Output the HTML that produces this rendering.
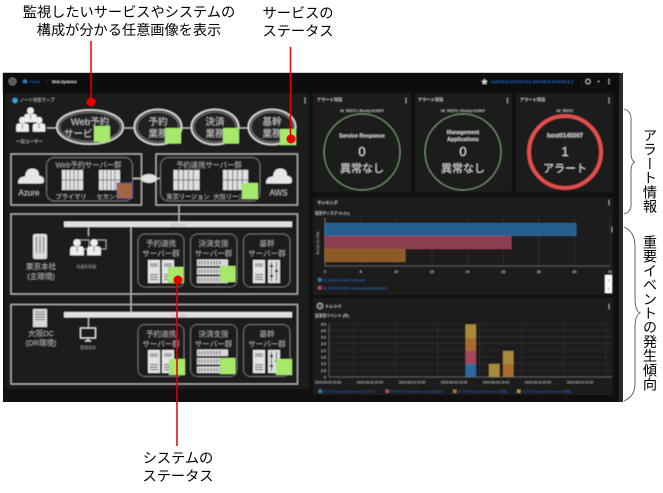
<!DOCTYPE html>
<html lang="ja"><head><meta charset="utf-8"><title>Web Systems</title>
<style>
html,body{margin:0;padding:0;background:#fff;width:663px;height:493px;overflow:hidden}
svg{position:absolute;left:0;top:0}
text{font-family:"Liberation Sans","Noto Sans CJK JP",sans-serif}
.jp{font-family:"Liberation Sans","Noto Sans CJK JP",sans-serif;color:#000;position:absolute;font-size:14.2px;line-height:18px;white-space:nowrap;text-align:center}
.v{writing-mode:vertical-rl;text-orientation:mixed;line-height:16px;letter-spacing:0}
.t{fill:#bdbdbd;text-anchor:middle}
</style></head><body>
<svg width="663" height="493" viewBox="0 0 663 493" xmlns="http://www.w3.org/2000/svg">
<defs>
<filter id="soft"><feGaussianBlur stdDeviation="0.4"/></filter>
<g id="srv"><rect x="0" y="0" width="12" height="23" fill="#e4e4e4"/><rect x="2" y="3" width="8" height="4" fill="#aaa"/><rect x="2" y="14" width="8" height="1.2" fill="#777"/><rect x="2" y="16.5" width="8" height="1.2" fill="#777"/><rect x="2" y="19" width="8" height="1.2" fill="#777"/></g>
<g id="rack"><rect x="0" y="0" width="31" height="6.5" fill="#d8d8d8"/><rect x="0" y="8.5" width="31" height="6.5" fill="#d8d8d8"/><rect x="0" y="17" width="31" height="6.5" fill="#d8d8d8"/><path d="M2 1.5V5M5 1.5V5M8 1.5V5M11 1.5V5M14 1.5V5M17 1.5V5M20 1.5V5M23 1.5V5M2 10V13.500M5 10V13.500M8 10V13.500M11 10V13.500M14 10V13.500M17 10V13.500M20 10V13.500M23 10V13.500M2 18.500V22M5 18.500V22M8 18.500V22M11 18.500V22M14 18.500V22M17 18.500V22M20 18.500V22M23 18.500V22" stroke="#777" stroke-width="1.200"/></g>
<g id="sw"><rect x="0" y="0" width="12" height="23" fill="#ddd"/><path d="M3.500 2V21M8.500 2V21" stroke="#555" stroke-width="1"/><rect x="2" y="5" width="3" height="2" fill="#222"/><rect x="7" y="10" width="3" height="2" fill="#222"/><rect x="2" y="15" width="3" height="2" fill="#222"/></g>
<g id="blade"><rect x="0" y="0" width="21" height="20" fill="#e0e0e0"/><path d="M4 0V20M8 0V20M12 0V20M16 0V20" stroke="#8a8a8a" stroke-width="1"/><path d="M0 10H21" stroke="#555" stroke-width=".8"/></g>
<g id="person"><circle cx="0" cy="-5" r="3.200" fill="#eee"/><path d="M-6 6V1Q-6 -2 -3 -2H3Q6 -2 6 1V6Z" fill="#eee"/><path d="M0 -2V3" stroke="#555" stroke-width=".7"/></g>
<g id="cloud"><path d="M-13 7Q-13 0 -6 0Q-5 -8 1 -8Q8 -8 8 -1Q13 0 13 4Q13 7 10 7Z" fill="#e6e6e6"/></g>
</defs>
<rect x="3" y="73" width="620" height="329" fill="#101010"/>
<rect x="619" y="73" width="4" height="329" fill="#2b2b2b"/>
<g filter="url(#soft)">
<rect x="3" y="73" width="616" height="20" fill="#0c0c0c"/>
<!-- top bar -->
<circle cx="12.500" cy="81.500" r="4" fill="#6d6d6d"/><path d="M10 80h5M10 81.500h5M10 83h5" stroke="#222" stroke-width=".6"/>
<path d="M23 83V81L25 79L27 81V83Z" fill="#2f7fd0"/>
<text x="30" y="83" font-size="3.600" fill="#1f6cc4">Home</text>
<text x="46" y="83" font-size="4" fill="#888">›</text>
<text x="52" y="83" font-size="3.800" font-weight="bold" fill="#d5d5d5">Web Systems</text>
<path d="M484.500 78.500l1 2.200 2.300.2-1.800 1.500.6 2.200-2.100-1.200-2.100 1.200.6-2.200-1.800-1.500 2.300-.2z" fill="#ddd"/>
<text x="491" y="83" font-size="3.500" fill="#1f5fb5" font-weight="bold">2023-08-03 15:00:00 から 2023-08-03 16:00:00 まで</text>
<circle cx="588" cy="81.500" r="2.300" fill="none" stroke="#ccc" stroke-width=".8"/>
<rect x="582" y="76" width="13" height="11" fill="none" stroke="#222" stroke-width=".6"/>
<rect x="597" y="76" width="9" height="11" fill="none" stroke="#222" stroke-width=".6"/>
<circle cx="598.500" cy="81.500" r=".7" fill="#ccc"/><path d="M609 79v5" stroke="#ccc" stroke-width="1" stroke-dasharray="1 1"/>
<!-- left panel -->
<rect x="5" y="94" width="304" height="295" fill="#1c1c1c"/>
<circle cx="15" cy="100.500" r="2.600" fill="#35a6e0"/>
<text x="20" y="101.500" font-size="4.300" fill="#bbb">ノード状態マップ</text>
<path d="M305 98v5" stroke="#ccc" stroke-width="1" stroke-dasharray="1 1"/>
<!-- persons -->
<use href="#person" transform="translate(30.500 116) scale(1.050)"/>
<use href="#person" transform="translate(22.500 125.500) scale(1.050)"/>
<use href="#person" transform="translate(39 125.500) scale(1.050)"/>
<text x="29.500" y="143" font-size="4.500" class="t">一般ユーザー</text>
<path d="M47 128H58M124 128H135M181 128H192M239 128H249" stroke="#bbb" stroke-width="1.200"/>
<g fill="#202020" stroke="#d5d5d5">
<ellipse cx="90" cy="127" rx="33" ry="17" stroke-width="1.800"/>
<ellipse cx="158" cy="127" rx="23.500" ry="17.500" stroke-width="1.800"/>
<ellipse cx="215" cy="127" rx="23.500" ry="17.500" stroke-width="1.800"/>
<ellipse cx="272" cy="127" rx="23.500" ry="17.500" stroke-width="1.800"/>
</g>
<g fill="none" stroke="#6f6f6f" stroke-width="1.300">
<ellipse cx="90" cy="127" rx="30.500" ry="14.500"/>
<ellipse cx="158" cy="127" rx="21" ry="15"/>
<ellipse cx="215" cy="127" rx="21" ry="15"/>
<ellipse cx="272" cy="127" rx="21" ry="15"/>
</g>
<g font-size="9.500" text-anchor="middle" fill="#c4c4c4">
<text x="90" y="125">Web予約</text><text x="83" y="137">サービス</text>
<text x="158" y="125">予約</text><text x="158" y="137">業務</text>
<text x="215" y="125">決済</text><text x="215" y="137">業務</text>
<text x="272" y="125">基幹</text><text x="272" y="137">業務</text>
</g>
<g fill="#a6e86a">
<rect x="94" y="126" width="16" height="16"/><rect x="165" y="128" width="16" height="15.500"/><rect x="223" y="128" width="16" height="15.500"/><rect x="280" y="129" width="16" height="16"/>
</g>
<!-- cloud boxes -->
<g fill="none" stroke="#b5b5b5" stroke-width="1.200">
<rect x="11" y="154" width="130.500" height="51"/><rect x="156" y="154" width="141.500" height="51"/>
<rect x="11" y="214" width="286.500" height="80"/><rect x="11" y="304.500" width="286.500" height="79.500"/>
</g>
<g fill="none" stroke="#6e6e6e" stroke-width="1">
<rect x="46.500" y="157.500" width="86" height="43.500" rx="8"/><rect x="160.500" y="157.500" width="99.500" height="43.500" rx="8"/>
</g>
<path d="M133 178.500H145M153 178.500H160" stroke="#ccc" stroke-width="1.500"/>
<ellipse cx="149" cy="178.500" rx="8" ry="4.500" fill="#e2e2e2"/>
<use href="#cloud" transform="translate(31 176.500)"/><use href="#cloud" transform="translate(279 176.500)"/>
<text x="29" y="195.500" font-size="8" fill="#bdbdbd" text-anchor="middle">Azure</text>
<text x="278.500" y="195.500" font-size="8" fill="#bdbdbd" text-anchor="middle">AWS</text>
<g font-size="7.300" fill="#a0a0a0" text-anchor="middle">
<text x="88.500" y="167.500">Web予約サーバー群</text><text x="209" y="167.500">予約連携サーバー群</text>
</g>
<use href="#blade" transform="translate(62 170)"/><use href="#blade" transform="translate(99 170)"/>
<use href="#blade" transform="translate(173.500 170) scale(1.240 1)"/><use href="#blade" transform="translate(223 170) scale(1.200 1)"/>
<g font-size="6.200" fill="#b0b0b0" text-anchor="middle">
<text x="71" y="199">プライマリ</text><text x="112" y="199">セカンダリ</text>
<text x="188" y="199">東京リージョン</text><text x="235" y="199">大阪リージョン</text>
</g>
<rect x="117" y="183" width="15.500" height="15.500" fill="#a5663f" stroke="#4a4aa8" stroke-width=".8"/>
<rect x="242" y="183" width="16" height="16" fill="#a6e86a"/>
<path d="M179 205V222M131 227V312M88.500 227V236M88.500 317V328" stroke="#bbb" stroke-width="1.200"/>
<rect x="64" y="221.500" width="228" height="5.500" fill="#e0e0e0"/>
<rect x="64" y="312" width="228" height="5.500" fill="#e0e0e0"/>
<text x="178" y="226" font-size="4" fill="#aaa" text-anchor="middle">本社LAN</text>
<text x="178" y="316.500" font-size="4" fill="#aaa" text-anchor="middle">DC LAN</text>
<!-- HQ building -->
<rect x="33" y="234" width="14" height="25" rx="2" fill="#dcdcdc"/>
<path d="M36.500 237V253M40 237V253M43.500 237V253" stroke="#555" stroke-width="1"/>
<g font-size="7.500" fill="#a5a5a5" text-anchor="middle">
<text x="41" y="269">東京本社</text><text x="41" y="279">(主環境)</text>
<text x="41" y="336">大阪DC</text><text x="41" y="345.500">(DR環境)</text>
</g>
<rect x="77" y="240" width="12" height="9" fill="none" stroke="#bbb" stroke-width=".8"/><rect x="94" y="240" width="12" height="9" fill="none" stroke="#bbb" stroke-width=".8"/>
<use href="#person" transform="translate(77 248.500) scale(1.150)"/><use href="#person" transform="translate(94 248.500) scale(1.150)"/>
<text x="86.500" y="268" font-size="4" fill="#999" text-anchor="middle">社員利用者</text>
<!-- DC building -->
<rect x="33" y="309" width="14" height="18" fill="#d8d8d8"/><path d="M35 312h10M35 314.500h10M35 317h10M35 319.500h10" stroke="#666" stroke-width=".9"/>
<rect x="80.500" y="328" width="15" height="10" fill="none" stroke="#ddd" stroke-width="1.300"/>
<path d="M85 341H91M88 338V341" stroke="#ddd" stroke-width="1.300"/>
<text x="88" y="349" font-size="4" fill="#999" text-anchor="middle">管理端末</text>
<!-- server groups -->
<g fill="none" stroke="#6b6b6b" stroke-width="1">
<rect x="138" y="234" width="46" height="53" rx="7"/><rect x="190.500" y="234" width="46.500" height="53" rx="7"/><rect x="243.500" y="234" width="46.500" height="53" rx="7"/>
<rect x="138" y="324.500" width="46" height="52" rx="7"/><rect x="190.500" y="324.500" width="46.500" height="52" rx="7"/><rect x="243.500" y="324.500" width="46.500" height="52" rx="7"/>
</g>
<g font-size="7.500" fill="#a0a0a0" text-anchor="middle">
<text x="161" y="246">予約連携</text><text x="161" y="256">サーバー群</text>
<text x="213.500" y="246">決済支援</text><text x="213.500" y="256">サーバー群</text>
<text x="267" y="246">基幹</text><text x="267" y="256">サーバー群</text>
<text x="161" y="336.500">予約連携</text><text x="161" y="346.500">サーバー群</text>
<text x="213.500" y="336.500">決済支援</text><text x="213.500" y="346.500">サーバー群</text>
<text x="267" y="336.500">基幹</text><text x="267" y="346.500">サーバー群</text>
</g>
<use href="#srv" x="148" y="260"/><use href="#srv" x="162" y="260"/><use href="#rack" x="197" y="259.500"/><use href="#srv" x="253" y="260"/><use href="#sw" x="268" y="260"/>
<use href="#srv" x="148" y="350"/><use href="#srv" x="162" y="350"/><use href="#rack" x="197" y="349.500"/><use href="#srv" x="253" y="350"/><use href="#sw" x="268" y="350"/>
<g fill="#a6e86a">
<rect x="167.500" y="267" width="16" height="16"/><rect x="220" y="266" width="15.500" height="16"/>
<rect x="169" y="359" width="16" height="16"/><rect x="220" y="358" width="15.500" height="16"/><rect x="276" y="359" width="16" height="16"/>
</g>
<!-- alert panels -->
<g fill="#1c1c1c"><rect x="313" y="93" width="98" height="99"/><rect x="415" y="93" width="97" height="99"/><rect x="516" y="93" width="97" height="99"/><rect x="313" y="197" width="300" height="98"/><rect x="313" y="298" width="300" height="97"/></g>
<g font-size="4.200" fill="#b5b5b5" font-weight="bold">
<text x="317" y="101">アラート情報</text><text x="418" y="101">アラート情報</text><text x="520" y="101">アラート情報</text>
</g>
<path d="M406 98v5M507.500 98v5M609 98v5M609 200v5M609 304v5M612 227v5" stroke="#ccc" stroke-width="1" stroke-dasharray="1 1"/>
<g font-size="3.600" fill="#b5b5b5" text-anchor="middle" font-weight="bold">
<text x="362" y="112">IN_TEST1 / Rocky-014507</text><text x="463" y="112">IN_TEST1 / Rocky-014507</text><text x="565" y="112">IN_TEST2</text>
</g>
<circle cx="362" cy="152" r="38" fill="none" stroke="#76a56f" stroke-width="1"/>
<circle cx="463" cy="152" r="38" fill="none" stroke="#76a56f" stroke-width="1"/>
<circle cx="565" cy="152" r="36" fill="none" stroke="#e2504d" stroke-width="3.800"/>
<g fill="#d6d6d6" text-anchor="middle">
<text x="362" y="137.500" font-size="5.300" font-weight="bold">Service Response</text>
<text x="463" y="134" font-size="5.300" font-weight="bold">Management</text><text x="463" y="141" font-size="5.300" font-weight="bold">Applications</text>
<text x="565" y="137.500" font-size="6" font-weight="bold">host0145007</text>
<text x="362" y="156" font-size="13">0</text><text x="463" y="156" font-size="13">0</text><text x="565" y="156" font-size="13">1</text>
<text x="362" y="172" font-size="11">異常なし</text><text x="463" y="172" font-size="11">異常なし</text><text x="565" y="172" font-size="11">アラート</text>
</g>
<!-- ranking -->
<text x="317" y="204" font-size="4.200" fill="#b5b5b5" font-weight="bold">ランキング</text>
<text x="315" y="214.500" font-size="3.800" fill="#aaa" font-weight="bold">仮想ディスク IO (%)</text>
<g stroke="#3a3a3a" stroke-width=".6"><path d="M325 218V267M360.600 218V267M396.200 218V267M431.900 218V267M467.500 218V267M503.100 218V267M538.800 218V267M574.400 218V267M610 218V267"/></g>
<path d="M325 266H610" stroke="#555" stroke-width="1"/><path d="M325 218V266" stroke="#777" stroke-width=".7"/>
<rect x="325" y="223.500" width="251" height="12" fill="#265f8d" stroke="#2e7ab0" stroke-width=".7"/>
<rect x="325" y="236.500" width="186" height="12" fill="#8c3d4f" stroke="#b14a60" stroke-width=".7"/>
<rect x="325" y="249.500" width="80" height="12" fill="#8b5c26" stroke="#a96f2a" stroke-width=".7"/>
<text x="319" y="243" font-size="3.500" fill="#aaa" text-anchor="middle" transform="rotate(-90 319 243)">Rocky-01-45G</text>
<g font-size="3.600" fill="#aaa" text-anchor="middle" font-weight="bold">
<text x="325" y="273">0</text><text x="360.600" y="273">5</text><text x="396.200" y="273">10</text><text x="431.900" y="273">15</text><text x="467.500" y="273">20</text><text x="503.100" y="273">25</text><text x="538.800" y="273">30</text><text x="574.400" y="273">35</text><text x="610" y="273">40</text>
</g>
<rect x="318" y="278" width="3.500" height="3.500" fill="#2e7ab0"/><rect x="318" y="286" width="3.500" height="3.500" fill="#b14a60"/>
<text x="323" y="281.500" font-size="3.300" fill="#1f6cc4">IN_VMSS.A14507 (volume1)</text>
<text x="323" y="289.500" font-size="3.300" fill="#1f6cc4">IN_VMSS.A14507 (ubuntu/snapshots/sda2)</text>
<rect x="605" y="275" width="7" height="18" fill="#fff"/><text x="608.500" y="281" font-size="3.500" fill="#777" text-anchor="middle">▲</text><text x="608.500" y="290" font-size="3.500" fill="#777" text-anchor="middle">▼</text>
<!-- trend -->
<circle cx="320" cy="306" r="2.800" fill="none" stroke="#ccc" stroke-width=".8"/><path d="M320 304.500V306.500H321.500" stroke="#ccc" stroke-width=".6" fill="none"/>
<text x="325" y="307.500" font-size="4.200" fill="#b5b5b5" font-weight="bold">トレンド</text>
<text x="315" y="317" font-size="3.800" fill="#aaa" font-weight="bold">重要度イベント (件)</text>
<g stroke="#333" stroke-width=".6"><path d="M329 324H612M329 330.600H612M329 337.200H612M329 343.700H612M329 350.500H612M329 357H612M329 363.700H612M329 370.300H612"/><path d="M353.300 324V377M395.300 324V377M437.300 324V377M479.300 324V377M521.300 324V377M563.300 324V377M606 324V377"/></g>
<path d="M329 377H612" stroke="#555" stroke-width="1"/><path d="M329 324V377" stroke="#666" stroke-width=".7"/>
<g font-size="3.600" fill="#aaa" text-anchor="end" font-weight="bold">
<text x="326" y="325.500">4.0</text><text x="326" y="332">3.5</text><text x="326" y="338.700">3.0</text><text x="326" y="345.200">2.5</text><text x="326" y="352">2.0</text><text x="326" y="358.500">1.5</text><text x="326" y="365.200">1.0</text><text x="326" y="371.800">0.5</text><text x="326" y="378.500">0</text>
</g>
<rect x="465.500" y="364" width="10.500" height="13" fill="#2a6c9e"/><rect x="465.500" y="351" width="10.500" height="13" fill="#a6445a"/><rect x="465.500" y="338" width="10.500" height="13" fill="#a86c2d"/><rect x="465.500" y="324.500" width="10.500" height="13.500" fill="#a98a3c"/>
<rect x="489" y="364" width="10.500" height="13" fill="#a98a3c"/>
<rect x="503" y="364" width="10.500" height="13" fill="#a86c2d"/><rect x="503" y="351" width="10.500" height="13" fill="#a98a3c"/>
<g font-size="3.300" fill="#999" text-anchor="middle" font-weight="bold">
<text x="328" y="383.500">2023-08-03 16:32</text><text x="370" y="383.500">2023-08-03 16:00</text><text x="412" y="383.500">2023-08-03 15:08</text><text x="454" y="383.500">2023-08-03 15:28</text><text x="496" y="383.500">2023-08-03 15:44</text><text x="538" y="383.500">2023-08-03 20:00</text><text x="580" y="383.500">2023-08-03 20:20</text>
</g>
<rect x="318.500" y="389.500" width="3.500" height="3.500" fill="#2e7ab0"/><rect x="385.500" y="389.500" width="3.500" height="3.500" fill="#b14a60"/><rect x="453" y="389.500" width="3.500" height="3.500" fill="#a96f2a"/><rect x="517" y="389.500" width="3.500" height="3.500" fill="#a98a3c"/>
<g font-size="3" fill="#1f6cc4">
<text x="323" y="392.500">IN_TEST1 (host:4100, severity:エラー)</text><text x="390" y="392.500">IN_TEST1 (host:4100, severity:高scale)</text><text x="458" y="392.500">IN_TEST1 (host:4100, severity:警告)</text><text x="522" y="392.500">IN_TEST1 (host:4100, severity:通知)</text>
</g>
</g>
<!-- red callouts -->
<path d="M91 41V102M290.500 47V139M177 280V446" stroke="#e60000" stroke-width="1.500" fill="none"/>
<circle cx="91" cy="102" r="4.500" fill="#e60000"/><circle cx="291" cy="139" r="4.500" fill="#e60000"/><circle cx="178" cy="280" r="4.500" fill="#e60000"/>
<!-- braces -->
<path d="M624 109Q632 111 631 122V152Q631 161 635 162Q631 163 631 172V202Q632 212 624 214" fill="none" stroke="#555" stroke-width=".9"/>
<path d="M624 227Q635 232 635 246V298Q635 311 640 313Q635 315 635 328V384Q635 396 624 401" fill="none" stroke="#555" stroke-width=".9"/>
</svg>
<div class="jp" style="left:0;width:258px;top:4px">監視したいサービスやシステムの<br>構成が分かる任意画像を表示</div>
<div class="jp" style="left:258px;width:80px;top:5px">サービスの<br>ステータス</div>
<div class="jp" style="left:138px;width:80px;top:450px">システムの<br>ステータス</div>
<div class="jp v" style="left:641px;top:128px">アラート情報</div>
<div class="jp v" style="left:641px;top:235px">重要イベントの発生傾向</div>
</body></html>
